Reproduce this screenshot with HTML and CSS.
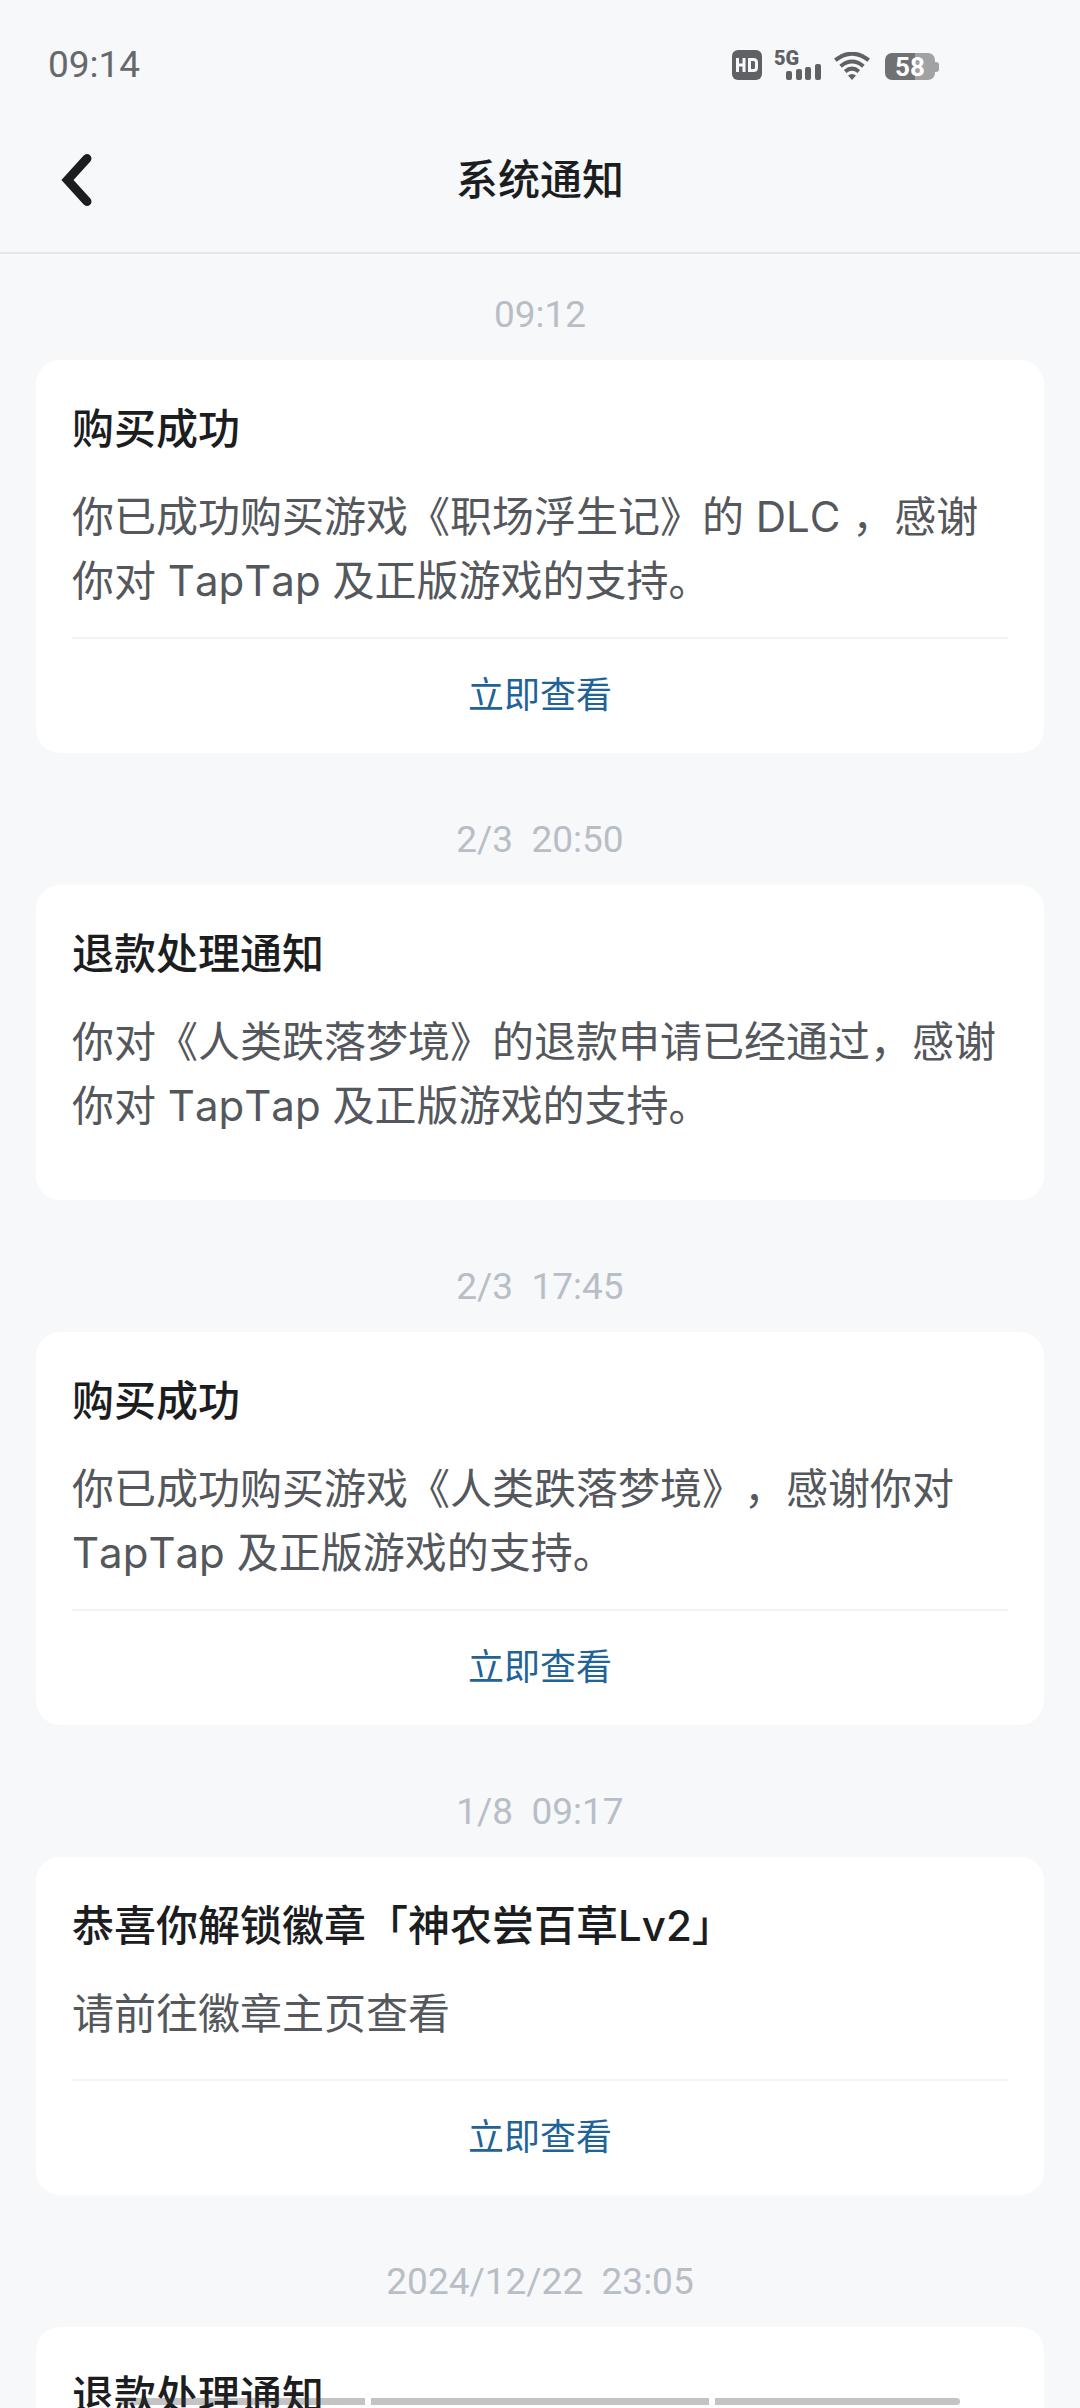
FILE: index.html
```html
<!DOCTYPE html>
<html lang="zh-CN">
<head>
<meta charset="utf-8">
<meta name="viewport" content="width=device-width, initial-scale=1">
<title>系统通知</title>
<link rel="stylesheet" href="styles.css">
</head>
<body>
<div class="app">
  <div class="status">
    <time class="status-time">09:14</time>
    <div class="status-icons">
      <svg class="icon" width="30" height="30" viewBox="0 0 30 30" role="img" aria-label="HD">
        <rect width="30" height="30" rx="6" fill="#5f6164"/>
        <path d="M5.500 8v14M12 8v14M5.500 15H12M17.500 9.500V20.500H21.500Q24.500 20.500 24.500 17.500V12.500Q24.500 9.500 21.500 9.500H16" fill="none" stroke="#f7f8fa" stroke-width="3"/>
      </svg>
      <div class="signal">
        <span class="signal-type">5G</span>
        <svg class="signal-bars" width="36" height="18" viewBox="0 0 36 18" aria-hidden="true" fill="#5f6164">
          <rect x="0" y="9" width="6" height="9" rx="2"/>
          <rect x="10" y="7" width="6" height="11" rx="2"/>
          <rect x="19" y="5" width="6" height="13" rx="2"/>
          <rect x="29" y="2" width="6" height="16" rx="2"/>
        </svg>
      </div>
      <svg class="icon" width="36" height="28" viewBox="0 0 36 28" aria-hidden="true">
        <g fill="none" stroke="#5f6164" stroke-width="4">
          <path d="M1.300 8.200Q18-4.800 34.700 8.200"/>
          <path d="M6.600 14.200Q18 4.800 29.400 14.200"/>
          <path d="M11.200 19.600Q18 13.800 24.800 19.600"/>
        </g>
        <path d="M14 23.500Q18 20.500 22 23.500L18 28Z" fill="#5f6164"/>
      </svg>
      <div class="battery"><span class="battery-body">58</span></div>
    </div>
  </div>

  <header class="nav">
    <button class="back" type="button" aria-label="返回">
      <svg width="32" height="54" viewBox="0 0 32 54" aria-hidden="true">
        <path d="M27 5.500L7.500 27L27 48.500" fill="none" stroke="#1c1d1f" stroke-width="9" stroke-linecap="round"/>
      </svg>
    </button>
    <h1 class="nav-title">系统通知</h1>
  </header>

  <main class="feed">
    <section class="entry">
      <time class="stamp">09:12</time>
      <article class="card">
        <h2 class="card-title">购买成功</h2>
        <p class="card-body">你已成功购买游戏《职场浮生记》的 DLC ，感谢你对 TapTap 及正版游戏的支持。</p>
        <a class="card-link" href="#">立即查看</a>
      </article>
    </section>

    <section class="entry">
      <time class="stamp">2/3  20:50</time>
      <article class="card card-plain">
        <h2 class="card-title">退款处理通知</h2>
        <p class="card-body">你对《人类跌落梦境》的退款申请已经通过，感谢你对 TapTap 及正版游戏的支持。</p>
      </article>
    </section>

    <section class="entry">
      <time class="stamp">2/3  17:45</time>
      <article class="card">
        <h2 class="card-title">购买成功</h2>
        <p class="card-body">你已成功购买游戏《人类跌落梦境》，感谢你对 TapTap 及正版游戏的支持。</p>
        <a class="card-link" href="#">立即查看</a>
      </article>
    </section>

    <section class="entry">
      <time class="stamp">1/8  09:17</time>
      <article class="card">
        <h2 class="card-title">恭喜你解锁徽章「神农尝百草Lv2」</h2>
        <p class="card-body">请前往徽章主页查看</p>
        <a class="card-link" href="#">立即查看</a>
      </article>
    </section>

    <section class="entry">
      <time class="stamp">2024/12/22  23:05</time>
      <article class="card card-plain">
        <h2 class="card-title">退款处理通知</h2>
      </article>
    </section>
  </main>

  <div class="gesture" aria-hidden="true"><i></i><i></i><i></i></div>
</div>
</body>
</html>
```
FILE: styles.css
```css
* { box-sizing: border-box; }

body {
  margin: 0;
  background: #f7f8fa;
  color: #1c1d1f;
  font-family: Inter, "Noto Sans CJK SC", sans-serif;
  font-kerning: none;
  text-spacing-trim: space-all;
}

h1, h2, p { margin: 0; }

.app {
  display: flex;
  flex-direction: column;
  height: 100vh;
  overflow: hidden;
}

/* status bar */
.status {
  display: flex;
  flex: none;
  align-items: center;
  justify-content: space-between;
  height: 106px;
  padding: 24px 141px 0 48px;
}

.status-time {
  color: #66686a;
  font: 37px/44px Roboto, sans-serif;
}

.status-icons {
  display: flex;
  align-items: flex-end;
  gap: 12px;
}

.icon { display: block; }

.signal {
  display: grid;
  width: 48px;
  height: 30px;
}

.signal-type {
  grid-area: 1 / 1;
  color: #5f6164;
  font: 900 20px/16px Roboto, sans-serif;
}

.signal-bars {
  grid-area: 1 / 1;
  place-self: end;
}

.battery {
  display: flex;
  align-items: center;
  margin-left: 3px;
}

.battery-body {
  width: 50px;
  height: 27px;
  border-radius: 7px;
  background: linear-gradient(90deg, #6f7173 60%, #a1a2a4 60%);
  color: #fff;
  font: 700 26px/28px Roboto, sans-serif;
  text-align: center;
}

.battery::after {
  content: "";
  width: 4px;
  height: 10px;
  border-radius: 0 3px 3px 0;
  background: #a1a2a4;
}

/* title bar */
.nav {
  display: grid;
  grid-template-columns: 92px 1fr 92px;
  flex: none;
  align-items: center;
  height: 148px;
  padding: 2px 36px 0;
  border-bottom: 2px solid #e4e6ec;
}

.back {
  display: flex;
  padding: 24px;
  border: 0;
  background: none;
}

.nav-title {
  font-size: 42px;
  font-weight: 500;
  line-height: 64px;
  text-align: center;
}

/* notifications */
.feed {
  display: flex;
  flex: 1;
  flex-direction: column;
  gap: 65px;
  min-height: 0;
  padding: 39px 36px 0;
  overflow: hidden;
}

.entry {
  display: flex;
  flex: none;
  flex-direction: column;
  gap: 23px;
}

.stamp {
  color: #b8bec5;
  font: 37px/44px Roboto, sans-serif;
  text-align: center;
  white-space: pre;
}

.card {
  padding: 37px 36px 0;
  border-radius: 24px;
  background: #fff;
}

.card-plain { padding-bottom: 38px; }

.card-title {
  margin-bottom: 24px;
  font-size: 42px;
  font-weight: 500;
  line-height: 64px;
}

.card-body {
  min-height: 97px;
  padding-bottom: 24px;
  color: #54575c;
  font-size: 42px;
  line-height: 64px;
}

.card-link {
  display: block;
  padding: 26px 0 28px;
  border-top: 2px solid #f3f4f5;
  color: #1f6397;
  font-size: 36px;
  line-height: 60px;
  text-align: center;
  text-decoration: none;
}

/* system gesture bar, laid over the page */
.gesture {
  position: fixed;
  right: 120px;
  bottom: 3px;
  left: 120px;
  display: grid;
  grid-template-columns: 245fr 338fr 245fr;
  gap: 6px;
  height: 7px;
}

.gesture i { background: rgba(60, 60, 60, 0.3); }
.gesture i:first-child { border-radius: 4px 0 0 4px; }
.gesture i:last-child { border-radius: 0 4px 4px 0; }
```
